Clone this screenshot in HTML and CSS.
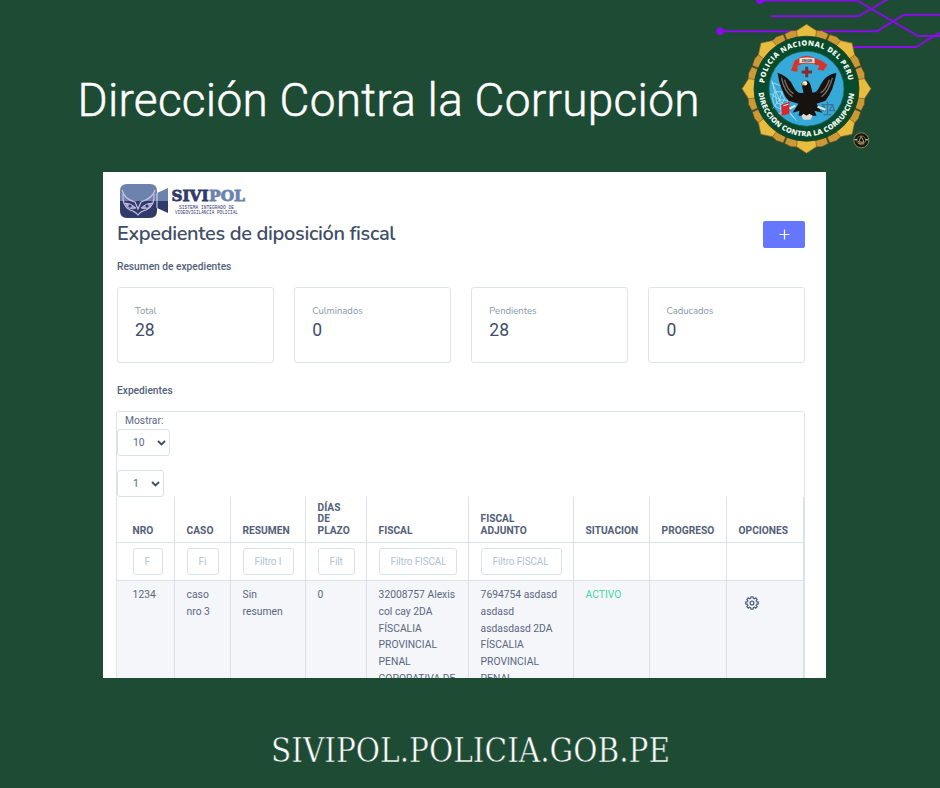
FILE: index.html
```html
<!DOCTYPE html>
<html lang="es">
<head>
<meta charset="utf-8">
<title>Dirección Contra la Corrupción</title>
<link rel="stylesheet" href="styles.css">
</head>
<body>
<div class="poster">
  <svg class="emblem" width="240" height="165" viewBox="0 0 240 165">
    <defs>
      <g id="ray-s"><path d="M-6 -50L-7 -58.500L0 -60L7 -58.500L6 -50Z" fill="#c99a36" stroke="#654d20" stroke-width=".6"/></g>
      <g id="ray"><path d="M-9 -50L-10 -58L0 -64.500L10 -58L9 -50Z" fill="#e6bd3f" stroke="#81622a" stroke-width=".7"/></g>
      <path id="arc-top" d="M-42.300 -5.500A42.600 42.600 0 0 1 42.300 -5.500"/>
      <path id="arc-bottom" d="M-47.800 4A48 48 0 0 0 47.800 4"/>
    </defs>
    <g fill="none" stroke="#8d0bea" stroke-width="2">
      <path d="M60 .5H157L218 36H240M71 16.300H158.500L188 -1M20 31.200H177L204 14.700H240M150 47H216L240 32.500"/>
    </g>
    <circle cx="60" cy="0" r="4" fill="#8d0bea"/><circle cx="20" cy="31.200" r="3.800" fill="#8d0bea"/>
    <g transform="translate(106.500 88.700)">
      <g>
        <use href="#ray-s" transform="rotate(15)"/><use href="#ray-s" transform="rotate(30)"/><use href="#ray-s" transform="rotate(60)"/><use href="#ray-s" transform="rotate(75)"/><use href="#ray-s" transform="rotate(105)"/><use href="#ray-s" transform="rotate(120)"/><use href="#ray-s" transform="rotate(150)"/><use href="#ray-s" transform="rotate(165)"/><use href="#ray-s" transform="rotate(195)"/><use href="#ray-s" transform="rotate(210)"/><use href="#ray-s" transform="rotate(240)"/><use href="#ray-s" transform="rotate(255)"/><use href="#ray-s" transform="rotate(285)"/><use href="#ray-s" transform="rotate(300)"/><use href="#ray-s" transform="rotate(330)"/><use href="#ray-s" transform="rotate(345)"/>
        <use href="#ray"/><use href="#ray" transform="rotate(45)"/><use href="#ray" transform="rotate(90)"/><use href="#ray" transform="rotate(135)"/><use href="#ray" transform="rotate(180)"/><use href="#ray" transform="rotate(225)"/><use href="#ray" transform="rotate(270)"/><use href="#ray" transform="rotate(315)"/>
      </g>
      <circle r="52.500" fill="#064b2b" stroke="#3a3a1c" stroke-width=".8"/>
      <circle r="37.500" fill="#37a9d8" stroke="#1c6a62" stroke-width=".8"/>
      <text class="ring-text"><textPath href="#arc-top" textLength="121">POLICIA NACIONAL DEL PERU</textPath></text>
      <text class="ring-text"><textPath href="#arc-bottom" textLength="141">DIRECCION CONTRA LA CORRUPCION</textPath></text>
      <g fill="none" stroke="#bfe6f2" stroke-width=".7">
        <path d="M-35 -8L-27 11L-10 32M-27 11L-36 5M-27 11L-34 20M-27 11L-22 -4M-27 11L-14 12M-27 11L-25 27M-34 -6L-23 -2L-18 9L-20 18L-27 20L-32 17L-34 10L-32 3ZM-31 3L-25 3L-22 10L-25 16L-30 14ZM-28 25L-19 22L-12 30"/>
      </g>
      <path d="M-15.500 -18L-12 -28L-5 -32Q0 -34 5 -32L15 -28L21 -24L17 -18L11 -19L13 -23Q0 -28 -9 -23L-9 -17Z" fill="#d6332c"/>
      <path d="M-7 -30.500Q0 -32 8 -30.500V-25.500Q0 -27 -7 -25.500Z" fill="#eee8dd"/>
      <text class="ribbon-text" x=".5" y="-27.200" text-anchor="middle">UNION</text>
      <path d="M-5 -16.800H5.500M.2 -22V-11.500" stroke="#7e2e34" stroke-width="3"/>
      <path d="M-29 -16Q-26 3 -18 12L-8 15L-14 24L-7 22L-8 27H10L8 22L16 24L10 15L19 12Q27 2 30 -16Q19 -14 14 -4Q11 4 6 4L4 -4Q2 -9 -2 -8L-5 -5L-3 4Q-9 6 -13 -2Q-17 -12 -29 -16Z" fill="#17120f"/>
      <path d="M-25 -11Q-22 4 -14 8M-22 -9Q-19 2 -13 5M26 -11Q22 3 15 8M23 -9Q19 2 14 4" fill="none" stroke="#77706a" stroke-width="1.300"/>
      <circle cx="-1.500" cy="-5.500" r="2.300" fill="#f2eee2"/><path d="M-5 -6L-1 -5L-4 -3Z" fill="#e1a62d"/>
      <path d="M-25 16L-17 13V25L-25 27Z" fill="#d9262b"/><path d="M-23 17L-18 15.500" stroke="#fff"/>
      <path d="M-5 27L-3 25L0 27L3 25L6 27L4 31H-3Z" fill="#ddd9cc"/>
      <path d="M15 16H27M21 13V26M17 26H25M17 16L14 22H19L17 16M26 16L23 22H28L26 16" fill="none" stroke="#3c7695" stroke-width="1.200"/>
      <path d="M-17 20L-11 17M11 18L19 21" stroke="#d5edf5" stroke-width="2"/>
    </g>
    <circle cx="161.300" cy="140.300" r="7.500" fill="#151812" stroke="#a79657" stroke-width=".8"/>
    <circle cx="161.300" cy="140.300" r="4.300" fill="#050505" stroke="#d4c68b" stroke-width=".5"/>
    <path d="M161.300 136.500L164 142H158.500ZM158.500 143.200H164" fill="none" stroke="#c6ad77" stroke-width="1"/>
    <path d="M154.500 139.800H157M165.500 139.800H168" stroke="#eee" stroke-width="1"/>
  </svg>

  <svg class="title" width="640" height="70" viewBox="0 0 640 70"><text x="-2.500" y="51" textLength="622">Dirección Contra la Corrupción</text></svg>

  <main class="panel">
    <svg class="brand" width="132" height="38" viewBox="0 0 132 38">
      <clipPath id="cam"><path d="M8 0H33Q40 0 40 7V9L51 4V29L40 24V27Q40 34 33 34H10Q3 34 3 27V7Q3 0 10 0Z"/></clipPath>
      <g clip-path="url(#cam)"><path fill="#6b83ad" d="M0 0H55V17H0Z"/><path fill="#303a6b" d="M0 17H55V38H0Z"/></g>
      <path d="M40 9V24" stroke="#fff" stroke-width=".8"/>
      <path d="M5 6Q7 15 18 18L21 25L24 18Q36 14 38 6M6 10Q5 22 13 26Q19 28 21 31Q24 27 29 26Q38 22 37 10" fill="none" stroke="#c9c1e3" stroke-width="1.200"/>
      <path d="M8 19Q14 19 19 24Q12 27 8 19ZM35 19Q29 19 24 24Q31 27 35 19Z" fill="#a9a6d0" stroke="#d8d0ed" stroke-width=".7"/>
      <circle cx="13" cy="22" r="1.600" fill="#303a6b"/><circle cx="30" cy="22" r="1.600" fill="#303a6b"/>
      <text class="brand-name" x="54.500" y="16.500" textLength="37" lengthAdjust="spacingAndGlyphs">SIVI</text>
      <text class="brand-name light" x="92" y="16.500" textLength="36" lengthAdjust="spacingAndGlyphs">POL</text>
      <text class="brand-sub" x="62" y="25" textLength="55" lengthAdjust="spacingAndGlyphs">SISTEMA INTEGRADO DE</text>
      <text class="brand-sub" x="58" y="30" textLength="63" lengthAdjust="spacingAndGlyphs">VIDEOVIGILANCIA POLICIAL</text>
    </svg>
    <div class="heading">
      <h1>Expedientes de diposición fiscal</h1>
      <button class="add" aria-label="+"><svg width="11" height="11" viewBox="0 0 11 11"><path d="M5.500 .5V10.500M.5 5.500H10.500" stroke="#fff" stroke-width="1.200"/></svg></button>
    </div>
    <h2>Resumen de expedientes</h2>
    <section class="cards">
      <div class="card"><span>Total</span><b>28</b></div>
      <div class="card"><span>Culminados</span><b>0</b></div>
      <div class="card"><span>Pendientes</span><b>28</b></div>
      <div class="card"><span>Caducados</span><b>0</b></div>
    </section>
    <h2 class="list-title">Expedientes</h2>
    <section class="list">
      <div class="show">Mostrar:</div>
      <div class="select">10<svg width="9" height="6" viewBox="0 0 9 6"><path d="M1 1L4.500 4.500L8 1"/></svg></div>
      <div class="select page">1<svg width="9" height="6" viewBox="0 0 9 6"><path d="M1 1L4.500 4.500L8 1"/></svg></div>
      <table>
        <colgroup><col class="c1"><col class="c2"><col class="c3"><col class="c4"><col class="c5"><col class="c6"><col class="c7"><col class="c8"><col class="c9"></colgroup>
        <tr class="head"><th>NRO</th><th>CASO</th><th>RESUMEN</th><th>DÍAS<br>DE<br>PLAZO</th><th>FISCAL</th><th>FISCAL<br>ADJUNTO</th><th>SITUACION</th><th>PROGRESO</th><th>OPCIONES</th></tr>
        <tr class="filters">
          <td><div class="filter"><span>F</span></div></td><td><div class="filter"><span>Fi</span></div></td><td><div class="filter"><span>Filtro I</span></div></td><td><div class="filter"><span>Filt</span></div></td><td><div class="filter"><span>Filtro FISCAL</span></div></td><td><div class="filter"><span>Filtro FISCAL</span></div></td><td></td><td></td><td></td>
        </tr>
        <tr class="data">
          <td>1234</td><td>caso<br>nro 3</td><td>Sin<br>resumen</td><td>0</td>
          <td>32008757 Alexis<br>col cay 2DA<br>FÍSCALIA<br>PROVINCIAL<br>PENAL<br>COPORATIVA DE</td>
          <td>7694754 asdasd<br>asdasd<br>asdasdasd 2DA<br>FÍSCALIA<br>PROVINCIAL<br>PENAL</td>
          <td class="active">ACTIVO</td><td></td>
          <td><svg class="gear" width="14" height="14" viewBox="0 0 14 14"><path d="M5.600 2.400L6 .8H8L8.400 2.400L9.300 2.800L10.700 1.900L12.100 3.300L11.200 4.700L11.600 5.600L13.200 6V8L11.600 8.400L11.200 9.300L12.100 10.700L10.700 12.100L9.300 11.200L8.400 11.600L8 13.200H6L5.600 11.600L4.700 11.200L3.300 12.100L1.900 10.700L2.800 9.300L2.400 8.400L.8 8V6L2.400 5.600L2.800 4.700L1.900 3.300L3.300 1.900L4.700 2.800Z"/><circle cx="7" cy="7" r="1.900"/></svg></td>
        </tr>
      </table>
    </section>
  </main>

  <svg class="site" width="400" height="50" viewBox="0 0 400 50"><text x="0" y="34" textLength="399" lengthAdjust="spacingAndGlyphs">SIVIPOL.POLICIA.GOB.PE</text></svg>
</div>
</body>
</html>
```
FILE: styles.css
```css
* { box-sizing: border-box; }
body { margin: 0; background: #1d4b34; }
.poster {
  position: relative;
  width: 940px;
  height: 788px;
  overflow: hidden;
  background: #1d4b34;
  font-family: Roboto, "Liberation Sans", sans-serif;
}
.emblem { position: absolute; top: 0; right: 0; }
.ring-text { font: 800 7.3px "Open Sans", sans-serif; fill: #f3f6ef; }
.ribbon-text { font: 700 3.5px Roboto, sans-serif; fill: #333; }

.title { display: block; margin: 65px 0 0 80px; overflow: visible; }
.title text { font: 300 46px Roboto, sans-serif; fill: #fff; stroke: #fff; stroke-width: .5px; }

.panel {
  width: 722.5px;
  height: 506px;
  margin: 37px 0 0 103px;
  padding: 12px 20.5px 0 14px;
  overflow: hidden;
  background: #fff;
  color: #5a6781;
}
.brand { display: block; }
.brand-name { font: 700 15px "DejaVu Serif", serif; fill: #303a6b; stroke: #303a6b; stroke-width: .8px; }
.brand-name.light { fill: #6b83ad; stroke: #6b83ad; }
.brand-sub { font: 400 5px "Liberation Mono", monospace; fill: #303a6b; }

.heading { display: flex; justify-content: space-between; height: 27px; margin-top: -1px; }
h1 {
  margin: 0;
  font: 600 20px/25px "Nunito", "Open Sans", sans-serif;
  letter-spacing: -.34px;
  color: #3e4e66;
  white-space: nowrap;
}
.add { display: flex; align-items: center; justify-content: center; width: 42px; height: 27px; padding: 0; border: 0; border-radius: 2px; background: #6576ff; }
h2 { margin: 11px 0 0; font-size: 10.2px; line-height: 16px; font-weight: 500; color: #536079; }

.cards { display: grid; grid-template-columns: repeat(4, 157px); justify-content: space-between; margin: 12px 0 0 -.5px; }
.card { height: 76px; padding: 16px 17.5px; border: 1px solid #dfe3ea; border-radius: 3px; }
.card span { display: block; font: 9.5px/14px Nunito, Lato, sans-serif; color: #8897aa; }
.card b { display: block; font-weight: 400; font-size: 17.5px; line-height: 24px; color: #3e4e66; }
.list-title { margin-top: 20px; }

.list { width: 689px; height: 280px; margin: 12px 0 0 -1px; border: 1px solid #dfe3ea; border-radius: 3px; font-size: 10.3px; }
.show { height: 17px; padding-left: 8px; line-height: 17px; }
.select { display: flex; align-items: center; justify-content: space-between; width: 53px; height: 27px; padding: 0 3px 0 15px; border: 1px solid #dbdfea; border-radius: 3px; }
.select svg { fill: none; stroke: #3c4d62; stroke-width: 1.8px; }
.select.page { width: 47px; margin-top: 14px; }

table { width: 687px; table-layout: fixed; border-collapse: separate; border-spacing: 0; }
.c1 { width: 58px; } .c2 { width: 56px; } .c3 { width: 75px; } .c4 { width: 61px; } .c5 { width: 102px; }
.c6 { width: 105px; } .c7 { width: 76px; } .c8 { width: 77px; } .c9 { width: 77px; }
th, td { padding: 0 0 0 11.6px; border-right: 1px solid #dbdfea; border-bottom: 1px solid #dbdfea; text-align: left; white-space: nowrap; }
th:first-child, td:first-child { padding-left: 15.6px; }
.head th { height: 46px; padding-bottom: 6px; vertical-align: bottom; font-size: 10.2px; line-height: 11.5px; font-weight: 700; color: #536079; }
.filters td { height: 38px; padding-right: 11px; }
.filter { height: 27px; padding: 0 10px 0 11px; border: 1px solid #dbdfea; border-radius: 3px; line-height: 25px; font-size: 10px; letter-spacing: -.15px; color: #b4bfd2; }
.filter span { display: block; overflow: hidden; }
.data td { height: 120px; padding-top: 6px; vertical-align: top; line-height: 16.8px; background: #f4f6fa; }
.data .active { color: #45d6a3; }
.gear { display: block; margin: 9px 0 0 6px; fill: none; stroke: #526484; stroke-width: 1.3px; }

.site { display: block; margin: 50px 0 0 271px; overflow: visible; }
.site text { font: 34px "DejaVu Serif Condensed", "DejaVu Serif", serif; fill: #fff; stroke: #1d4b34; stroke-width: .5px; }
```
